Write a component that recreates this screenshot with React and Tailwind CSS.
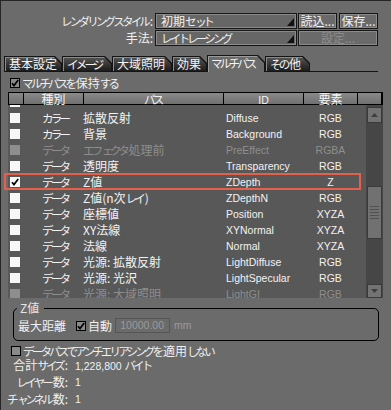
import React from "react";

const rows = [
  { t: "", p: "", id: "", e: "" },
  { t: "カラー", p: "拡散反射", id: "Diffuse", e: "RGB" },
  { t: "カラー", p: "背景", id: "Background", e: "RGB" },
  { t: "データ", p: "エフェクタ処理前", id: "PreEffect", e: "RGBA", dis: true },
  { t: "データ", p: "透明度", id: "Transparency", e: "RGB" },
  { t: "データ", p: "Z値", id: "ZDepth", e: "Z", on: true },
  { t: "データ", p: "Z値(n次レイ)", id: "ZDepthN", e: "RGB" },
  { t: "データ", p: "座標値", id: "Position", e: "XYZA" },
  { t: "データ", p: "XY法線", id: "XYNormal", e: "XYZA" },
  { t: "データ", p: "法線", id: "Normal", e: "XYZA" },
  { t: "データ", p: "光源: 拡散反射", id: "LightDiffuse", e: "RGB" },
  { t: "データ", p: "光源: 光沢", id: "LightSpecular", e: "RGB" },
  { t: "データ", p: "光源: 大域照明", id: "LightGI", e: "RGB", dis: true },
];

const tabs = [
  { l: "基本設定", w: "w-[58px]" },
  { l: "イメージ", w: "w-[50px]" },
  { l: "大域照明", w: "w-[60px]" },
  { l: "効果", w: "w-[35px]" },
  { l: "マルチパス", w: "w-[58px]", active: true },
  { l: "その他", w: "w-[45px]" },
];

const LAT = "font-['Liberation_Sans',sans-serif] text-[10.5px]";
const SMALL = "ぁぃぅぇぉっゃゅょゎァィゥェォッャュョヮヵヶ";

// Proportional kana: the CJK font here has no palt, so kana runs are set a little
// smaller and tighter to match the narrow UI kana of the reference.
function J({ children }) {
  const s = String(children);
  const parts = [];
  let cur = "";
  let kind = null;
  const kindOf = (ch) => {
    if (SMALL.includes(ch)) return "s";
    if (/[\u3040-\u30ff]/.test(ch)) return "k";
    return "o";
  };
  for (const ch of s) {
    const k = kindOf(ch);
    if (k !== kind && cur) {
      parts.push([kind, cur]);
      cur = "";
    }
    kind = k;
    cur += ch;
  }
  if (cur) parts.push([kind, cur]);
  return (
    <>
      {parts.map(([k, t], i) =>
        k === "k" ? (
          <span key={i} className="text-[11.5px] tracking-[-2.8px] mr-[1.6px]">
            {t}
          </span>
        ) : k === "s" ? (
          <span key={i} className="text-[11.5px] tracking-[-4.5px] mr-[1px]">
            {t}
          </span>
        ) : (
          <span key={i}>{t}</span>
        )
      )}
    </>
  );
}

function Tick() {
  return (
    <svg width="8" height="8" viewBox="0 0 8 8" className="block">
      <path d="M1 4.2 L3 6.6 L7.2 1" fill="none" stroke="#000" strokeWidth="1.7" />
    </svg>
  );
}

function GrayCheck({ checked }) {
  return (
    <div className="w-[10px] h-[10px] border border-black bg-[#8a8a8a] flex items-center justify-center shrink-0">
      {checked && <Tick />}
    </div>
  );
}

function Dropdown({ text }) {
  return (
    <div className="w-[142px] h-[16px] border border-[#161616]">
      <div className="h-full border border-[#8a8a8a] bg-[#666666] flex items-center pl-[4px] pr-[1px]">
        <span className="flex-1 leading-[12px] whitespace-nowrap">
          <J>{text}</J>
        </span>
        <svg width="7" height="8" viewBox="0 0 7 8" className="self-end mb-[1px]">
          <polygon points="7,0 7,8 0,8" fill="#111" />
        </svg>
      </div>
    </div>
  );
}

function Btn({ text, w, dis }) {
  return (
    <div className={`${w} h-[16px] border border-[#161616]`}>
      <div
        className={`h-full border border-[#8a8a8a] bg-[#6a6a6a] flex items-center justify-center leading-[12px] ${
          dis ? "text-[#8c8c8c]" : "text-[#f2f2f2]"
        }`}
      >
        {text}
      </div>
    </div>
  );
}

function Tab({ l, w, active }) {
  const clip = "[clip-path:polygon(0_0,calc(100%-7px)_0,100%_7px,100%_100%,0_100%)]";
  return (
    <div
      className={`${w} ${active ? "h-[17px] -mb-px" : "h-[15px]"} bg-[#141414] pt-px pl-px pr-px ${clip}`}
    >
      <div
        className={`h-full ${clip} ${
          active
            ? "bg-[#6b6b6b] shadow-[inset_1px_1px_0_#9a9a9a] pl-[3px] tracking-[0.6px]"
            : "bg-gradient-to-b from-[#565656] to-[#1c1c1c] shadow-[inset_1px_1px_0_#8a8a8a] pl-[4px]"
        } leading-[14px] whitespace-nowrap text-[#f4f4f4]`}
      >
        <J>{l}</J>
      </div>
    </div>
  );
}

function Row({ r }) {
  const col = r.dis ? "text-[#8e8e8e]" : "text-[#f2f2f2]";
  return (
    <div className={`flex h-[16px] items-center leading-[16px] whitespace-nowrap ${col}`}>
      <div className="w-[33px] pl-[2px] flex items-center">
        <div
          className={`w-[10px] h-[10px] flex items-center justify-center ${
            r.dis ? "bg-[#8e8e8e]" : "bg-[#f7f7f7]"
          }`}
        >
          {r.on && <Tick />}
        </div>
      </div>
      <div className="w-[42px] pl-px">
        <J>{r.t}</J>
      </div>
      <div className="w-[143px]">
        <J>{r.p}</J>
      </div>
      <div className={`w-[78px] ${LAT}`}>{r.id}</div>
      <div className={`w-[53px] text-center ${LAT}`}>{r.e}</div>
    </div>
  );
}

function HeadCell({ w, children }) {
  return (
    <div
      className={`${w} h-full bg-gradient-to-b from-[#8a8a8a] to-[#707070] text-center leading-[11px] text-[#f4f4f4]`}
    >
      {children}
    </div>
  );
}

export default function App() {
  return (
    <div className="relative w-[391px] h-[410px] overflow-hidden bg-[#6b6b6b] border-t border-l border-[#262626] text-[12px] text-[#f0f0f0] font-['Noto_Sans_CJK_JP',sans-serif]">
      {/* rendering style */}
      <div className="pt-[12px]">
        <div className="flex h-[16px] items-center">
          <div className="w-[152px] text-right whitespace-nowrap leading-[16px]">
            <J>レンダリングスタイル:</J>
          </div>
          <div className="ml-[2px]">
            <Dropdown text="初期セット" />
          </div>
          <div className="ml-[1px]">
            <Btn text="読込..." w="w-[39px]" />
          </div>
          <div className="ml-[2px]">
            <Btn text="保存..." w="w-[39px]" />
          </div>
        </div>
        <div className="flex h-[16px] items-center mt-px">
          <div className="w-[152px] text-right whitespace-nowrap leading-[16px]">手法:</div>
          <div className="ml-[2px]">
            <Dropdown text="レイトレーシング" />
          </div>
          <div className="ml-[1px]">
            <Btn text="設定..." w="w-[80px]" dis />
          </div>
        </div>
      </div>

      {/* tabs */}
      <div className="mt-[9px] ml-[3px] w-[374px] h-[17px] flex items-end border-b border-[#141414]">
        {tabs.map((t) => (
          <Tab key={t.l} {...t} />
        ))}
      </div>

      {/* keep multipass */}
      <div className="mt-[5px] h-[12px] flex items-center pl-[9px]">
        <GrayCheck checked />
        <span className="ml-[2px] leading-[12px] whitespace-nowrap">
          <J>マルチパスを保持する</J>
        </span>
      </div>

      {/* header */}
      <div className="mt-[3px] ml-[7px] w-[375px] h-[13px] bg-black p-px flex gap-px">
        <HeadCell w="w-[14px]" />
        <HeadCell w="w-[59px]">種別</HeadCell>
        <HeadCell w="w-[139px]">
          <J>パス</J>
        </HeadCell>
        <HeadCell w="w-[79px]">
          <span className={LAT}>ID</span>
        </HeadCell>
        <HeadCell w="w-[53px]">要素</HeadCell>
        <HeadCell w="w-[23px]" />
      </div>

      {/* list */}
      <div className="ml-[7px] w-[375px] h-[193px] bg-[#585858] flex overflow-hidden">
        <div className="w-[358px] h-full overflow-hidden">
          <div className="-mt-[11px]">
            {rows.map((r, i) => (
              <Row key={i} r={r} />
            ))}
          </div>
        </div>
        <div className="w-[17px] h-full bg-[#464646] flex flex-col items-center">
          <div className="mt-[2px] w-[15px] h-[16px] border border-[#3a3a3a] bg-[#737373] flex items-center justify-center">
            <svg width="7" height="4" viewBox="0 0 7 4">
              <polygon points="3.5,0 7,4 0,4" fill="#3e3e3e" />
            </svg>
          </div>
          <div className="mt-[63px] w-[15px] h-[53px] border border-[#3a3a3a] bg-[#717171] flex flex-col items-center justify-center gap-[2px]">
            <div className="w-[9px] h-px bg-[#505050]" />
            <div className="w-[9px] h-px bg-[#505050]" />
            <div className="w-[9px] h-px bg-[#505050]" />
            <div className="w-[9px] h-px bg-[#505050]" />
            <div className="w-[9px] h-px bg-[#505050]" />
          </div>
          <div className="flex-1" />
          <div className="w-[15px] h-[14px] border border-[#3a3a3a] bg-[#737373] flex items-center justify-center">
            <svg width="7" height="4" viewBox="0 0 7 4">
              <polygon points="0,0 7,0 3.5,4" fill="#3e3e3e" />
            </svg>
          </div>
        </div>
      </div>

      {/* Z group */}
      <fieldset className="mt-[3px] ml-[12px] w-[366px] border border-black rounded-[5px] px-[3px] pt-0 pb-[6px]">
        <legend className="pl-[3px] pr-[5px] leading-[14px] text-[#e6e6e6]">Z値</legend>
        <div className="mt-[2px] h-[17px] flex items-center ml-px whitespace-nowrap">
          <span className="leading-[17px]">最大距離</span>
          <div className="ml-[10px]">
            <GrayCheck checked />
          </div>
          <span className="ml-[2px] leading-[17px]">自動</span>
          <div
            className={`ml-[3px] w-[55px] h-[15px] border border-[#555555] flex items-center justify-end pr-[5px] text-[#9a9a9a] leading-[13px] ${LAT}`}
          >
            10000.00
          </div>
          <span className={`ml-[4px] text-[#9a9a9a] ${LAT}`}>mm</span>
        </div>
      </fieldset>

      {/* antialias */}
      <div className="mt-[3px] h-[13px] flex items-center pl-[10px]">
        <GrayCheck />
        <span className="ml-[2px] leading-[13px] whitespace-nowrap">
          <J>データパスでアンチエリアシングを適用しない</J>
        </span>
      </div>

      {/* info */}
      <div className="flex h-[17px] items-center whitespace-nowrap">
        <span className="w-[67px] text-right">
          <J>合計サイズ:</J>
        </span>
        <span className="ml-[7px]">
          <span className={LAT}>1,228,800</span> <J>バイト</J>
        </span>
      </div>
      <div className="flex h-[17px] items-center whitespace-nowrap">
        <span className="w-[67px] text-right">
          <J>レイヤー数:</J>
        </span>
        <span className={`ml-[7px] ${LAT}`}>1</span>
      </div>
      <div className="flex h-[17px] items-center whitespace-nowrap">
        <span className="w-[67px] text-right">
          <J>チャンネル数:</J>
        </span>
        <span className={`ml-[7px] ${LAT}`}>1</span>
      </div>

      {/* annotation highlight */}
      <div className="absolute left-[3px] top-[172px] w-[357px] h-[17px] border-2 border-[#e4604a] pointer-events-none" />
    </div>
  );
}
